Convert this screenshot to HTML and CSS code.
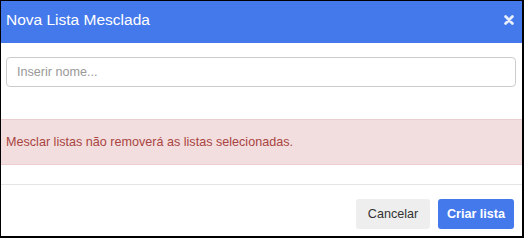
FILE: index.html
```html
<!DOCTYPE html>
<html lang="pt">
<head>
<meta charset="utf-8">
<link rel="stylesheet" href="styles.css">
</head>
<body>
<div class="modal">
  <div class="modal-header">
    <span class="modal-title">Nova Lista Mesclada</span>
    <span class="close" aria-label="Fechar">
      <svg width="10" height="10" viewBox="0 0 10 10"><path d="M1.6 1.6 L8.4 8.4 M8.4 1.6 L1.6 8.4" stroke="#e8eefc" stroke-width="2.8" stroke-linecap="round"/></svg>
    </span>
  </div>
  <div class="modal-body">
    <input class="name-input" type="text" placeholder="Inserir nome...">
  </div>
  <div class="alert">Mesclar listas não removerá as listas selecionadas.</div>
  <div class="modal-footer">
    <button class="btn btn-default">Cancelar</button>
    <button class="btn btn-primary">Criar lista</button>
  </div>
</div>
</body>
</html>
```
FILE: styles.css
```css
html, body {
  margin: 0;
  padding: 0;
  background: #000;
}
body {
  width: 524px;
  height: 238px;
  overflow: hidden;
  font-family: "Liberation Sans", Arial, sans-serif;
}
.modal {
  margin: 1px 2px 0 1px;
  height: 235px;
  background: #fff;
  display: flex;
  flex-direction: column;
}
.modal-header {
  height: 42px;
  background: #4479ec;
  display: flex;
  align-items: center;
  justify-content: space-between;
  padding: 0 8px 4px 5px;
  box-sizing: border-box;
}
.modal-title {
  color: #fff;
  font-size: 15.5px;
}
.close {
  display: flex;
  width: 10px;
  height: 10px;
}
.modal-body {
  padding: 14px 6px 0 5px;
  height: 76px;
  box-sizing: border-box;
}
.name-input {
  display: block;
  width: 100%;
  height: 30px;
  box-sizing: border-box;
  border: 1px solid #cccccc;
  border-radius: 4px;
  padding: 0 10px;
  font-family: "Liberation Sans", Arial, sans-serif;
  font-size: 12.6px;
  color: #555;
  outline: none;
}
.name-input::placeholder {
  color: #999;
}
.alert {
  height: 46px;
  box-sizing: border-box;
  background: #f2dede;
  border-top: 1px solid #ebccd1;
  border-bottom: 1px solid #ebccd1;
  color: #a94442;
  font-size: 12.6px;
  display: flex;
  align-items: center;
  padding: 0 5px;
}
.modal-footer {
  margin-top: 19px;
  border-top: 1px solid #e5e5e5;
  display: flex;
  justify-content: flex-end;
  gap: 8px;
  padding: 14px 8px 0 0;
}
.btn {
  height: 30px;
  border: none;
  border-radius: 3px;
  font-family: "Liberation Sans", Arial, sans-serif;
  font-size: 12.6px;
  padding: 0;
  white-space: nowrap;
  cursor: pointer;
}
.btn-default {
  background: #eeeeee;
  color: #333;
  width: 74px;
}
.btn-primary {
  background: #4479ec;
  color: #fff;
  font-weight: bold;
  width: 76px;
}
```
